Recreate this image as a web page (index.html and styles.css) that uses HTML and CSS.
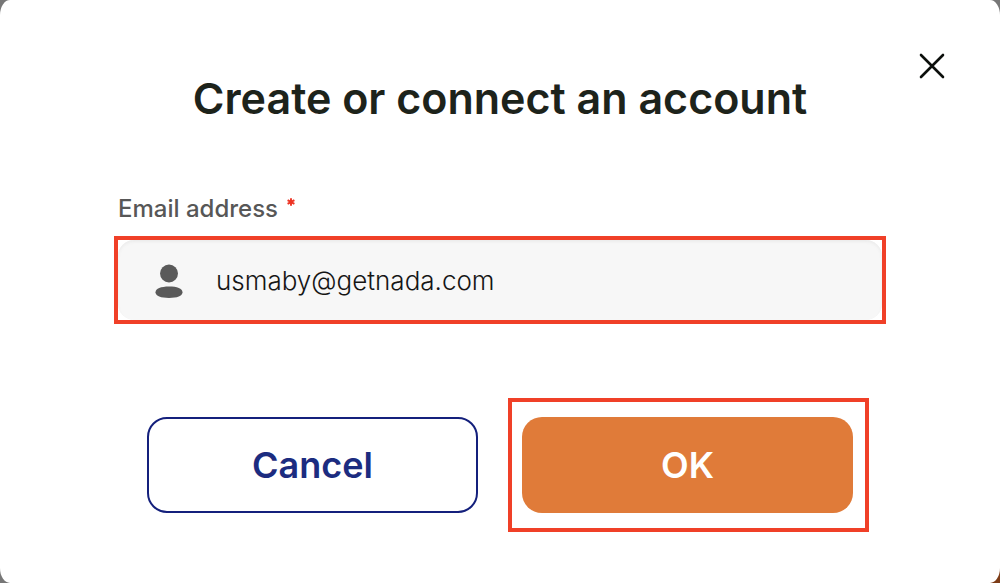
FILE: index.html
```html
<!DOCTYPE html>
<html lang="en">
<head>
<meta charset="utf-8">
<meta name="viewport" content="width=device-width, initial-scale=1">
<title>Create or connect an account</title>
<link rel="stylesheet" href="styles.css">
</head>
<body>
<main class="dialog" role="dialog" aria-labelledby="dialog-title">
  <button class="close" type="button" aria-label="Close">
    <svg width="28" height="28" viewBox="0 0 28 28" aria-hidden="true"><path d="M3 3 25 25M25 3 3 25" fill="none" stroke="#0c0f0c" stroke-width="2.6" stroke-linecap="round"/></svg>
  </button>
  <h1 class="title" id="dialog-title">Create or connect an account</h1>
  <form class="form">
    <label class="label" for="email">Email address<span class="required"><svg width="8" height="8" viewBox="0 0 8 8" aria-hidden="true"><path d="M4 .2V7.8M.6 2.1 7.4 5.9M7.4 2.1.6 5.9" fill="none" stroke="#ed3424" stroke-width="1.9"/></svg></span></label>
    <div class="highlight field-frame">
      <div class="field">
        <svg class="user" width="28" height="34" viewBox="0 0 28 34" aria-hidden="true"><circle cx="14" cy="9.500" r="9" fill="#5a5a5a"/><path d="M14 22.500C22 22.500 27.500 24.500 27.500 28.300S22 34 14 34 .5 32 .5 28.300 6 22.500 14 22.500Z" fill="#5a5a5a"/></svg>
        <input class="input" id="email" type="email" value="usmaby@getnada.com" required>
      </div>
    </div>
    <div class="actions">
      <button class="button cancel" type="button">Cancel</button>
      <div class="highlight ok-frame"><button class="button ok" type="submit">OK</button></div>
    </div>
  </form>
</main>
</body>
</html>
```
FILE: styles.css
```css
* { box-sizing: border-box; }

body {
  margin: 0;
  background: linear-gradient(135deg, #777 0 90%, #7d3c17 90%);
  font-family: Inter, "Liberation Sans", sans-serif;
}

.dialog {
  position: relative;
  min-height: 100vh;
  padding: 70px 114px 51px;
  background: #fff;
  border-radius: 10px / 15px;
}

.close {
  position: absolute;
  top: 52px;
  right: 54px;
  width: 28px;
  height: 28px;
  padding: 0;
  border: 0;
  background: none;
}

.close svg { display: block; }

.title {
  margin: 0;
  color: #1d231b;
  font-size: 43px;
  line-height: 56px;
  font-weight: 600;
  text-align: center;
  white-space: nowrap;
}

.form { margin-top: 67px; }

.label {
  display: flex;
  gap: 9px;
  padding-left: 4px;
  color: #575757;
  font-size: 24px;
  line-height: 32px;
  font-weight: 500;
}

.required {
  padding-top: 5px;
  line-height: 0;
}

.highlight { border: 4px solid #f04028; }

.field-frame { margin-top: 11px; }

.field {
  display: flex;
  align-items: center;
  gap: 33px;
  height: 80px;
  padding: 2px 37px 0;
  border-radius: 16px;
  background: #f7f7f7;
  box-shadow: inset 0 2px 3px #ececec;
}

.user { flex: none; }

.input {
  flex: 1;
  min-width: 0;
  padding: 0;
  border: 0;
  outline: 0;
  background: none;
  color: #151515;
  font: 300 26px/34px Inter, "Liberation Sans", sans-serif;
}

.actions {
  display: grid;
  grid-template-columns: 331fr 361fr;
  align-items: center;
  gap: 30px;
  margin-top: 74px;
  padding: 0 17px 0 33px;
}

.button {
  height: 96px;
  padding: 0;
  border-radius: 20px;
  font: 600 36px/44px Inter, "Liberation Sans", sans-serif;
}

.cancel {
  border: 2px solid #14207c;
  background: #fff;
  color: #1c2c80;
}

.ok-frame { padding: 15px 12px 15px 10px; }

.ok {
  display: block;
  width: 100%;
  border: 0;
  background: #e07b39;
  color: #fff;
}
```
